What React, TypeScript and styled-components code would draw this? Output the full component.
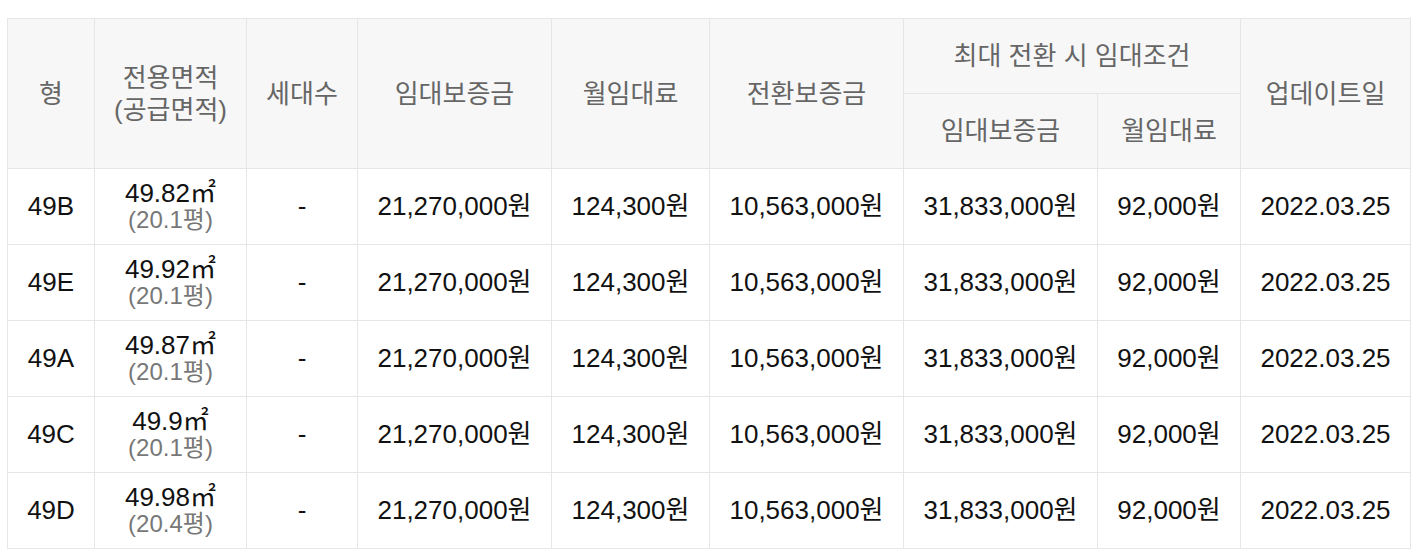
import React from 'react';
import styled, { createGlobalStyle } from 'styled-components';

const GlobalStyle = createGlobalStyle`
    body {
        margin: 0;
        background: #ffffff;
        font-family: 'Liberation Sans', 'Noto Sans CJK KR', sans-serif;
    }
`;

type Unit = {
    type: string;
    area: string;
    pyeong: string;
};

const units: Unit[] = [
    { type: '49B', area: '49.82', pyeong: '20.1' },
    { type: '49E', area: '49.92', pyeong: '20.1' },
    { type: '49A', area: '49.87', pyeong: '20.1' },
    { type: '49C', area: '49.9', pyeong: '20.1' },
    { type: '49D', area: '49.98', pyeong: '20.4' },
];

const widths = [87, 152, 111, 194, 158, 194, 194, 143, 170];

const App = () => {
    return (
        <>
            <GlobalStyle />
            <Page>
                <Table>
                    <colgroup>
                        {widths.map((w, i) => (
                            <col key={i} style={{ width: w }} />
                        ))}
                    </colgroup>
                    <thead>
                        <tr>
                            <Th rowSpan={2}>형</Th>
                            <Th rowSpan={2}>
                                전용면적
                                <br />
                                (공급면적)
                            </Th>
                            <Th rowSpan={2}>세대수</Th>
                            <Th rowSpan={2}>임대보증금</Th>
                            <Th rowSpan={2}>월임대료</Th>
                            <Th rowSpan={2}>전환보증금</Th>
                            <Th colSpan={2}>최대 전환 시 임대조건</Th>
                            <Th rowSpan={2}>업데이트일</Th>
                        </tr>
                        <tr>
                            <Th>임대보증금</Th>
                            <Th>월임대료</Th>
                        </tr>
                    </thead>
                    <tbody>
                        {units.map((u) => (
                            <tr key={u.type}>
                                <Td>{u.type}</Td>
                                <Td>
                                    <Area>{u.area}㎡</Area>
                                    <Pyeong>({u.pyeong}평)</Pyeong>
                                </Td>
                                <Td>-</Td>
                                <Td>21,270,000원</Td>
                                <Td>124,300원</Td>
                                <Td>10,563,000원</Td>
                                <Td>31,833,000원</Td>
                                <Td>92,000원</Td>
                                <Td>2022.03.25</Td>
                            </tr>
                        ))}
                    </tbody>
                </Table>
            </Page>
        </>
    );
};

const Page = styled.div`
    padding: 18px 15px 0 7px;
`;

const Table = styled.table`
    width: 1403px;
    table-layout: fixed;
    border-collapse: collapse;
    border-top: 1px solid #bdbdbd;
    border-left: 1px solid #e6e6e6;
    border-right: 1px solid #e6e6e6;
    border-bottom: 1px solid #e6e6e6;
`;

const Th = styled.th`
    height: 74px;
    padding: 0;
    background: #f7f7f7;
    border: 1px solid #e6e6e6;
    color: #666666;
    font-size: 26px;
    font-weight: 400;
    line-height: 32px;
    text-align: center;
    vertical-align: middle;
`;

const Td = styled.td`
    height: 75px;
    padding: 0;
    border: 1px solid #e6e6e6;
    color: #111111;
    font-size: 26px;
    line-height: 27px;
    text-align: center;
    vertical-align: middle;
`;

const Area = styled.div`
    color: #111111;
    font-size: 26px;
    line-height: 26px;
`;

const Pyeong = styled.div`
    color: #777777;
    font-size: 24px;
    line-height: 27px;
`;

export default App;
